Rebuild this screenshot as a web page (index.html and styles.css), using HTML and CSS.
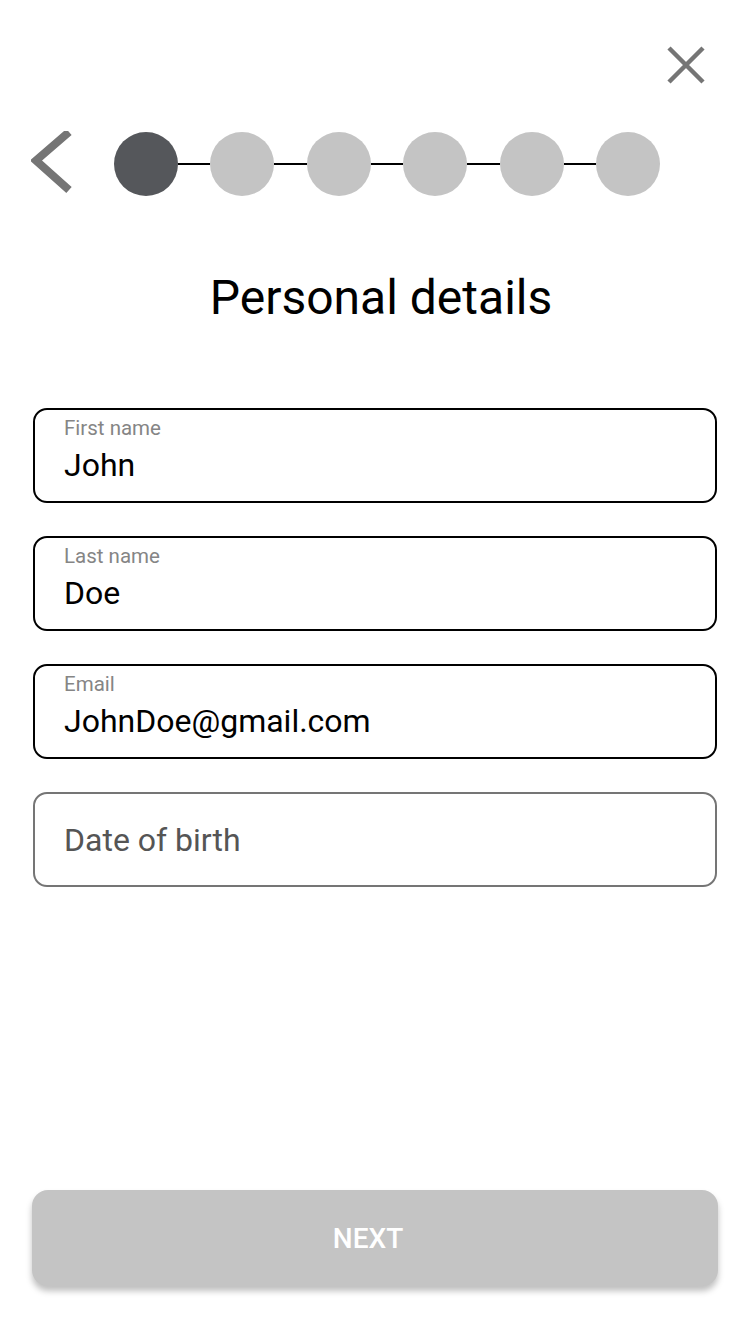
FILE: index.html
```html
<!DOCTYPE html>
<html lang="en">
<head>
<meta charset="utf-8">
<title>Personal details</title>
<link rel="stylesheet" href="styles.css">
</head>
<body>
<div class="screen">
  <div class="topbar">
    <button class="icon-btn close" aria-label="Close">
      <svg width="40" height="40" viewBox="0 0 40 40"><path d="M3 3 L37 37 M37 3 L3 37" stroke="#757575" stroke-width="4.5" fill="none"/></svg>
    </button>
  </div>
  <div class="stepper-row">
    <button class="icon-btn back" aria-label="Back">
      <svg width="44" height="66" viewBox="0 0 44 66"><path d="M38 1 L5 29.5 L38 59" stroke="#757575" stroke-width="8" fill="none"/></svg>
    </button>
    <div class="stepper">
      <span class="dot active"></span><span class="line"></span>
      <span class="dot"></span><span class="line"></span>
      <span class="dot"></span><span class="line"></span>
      <span class="dot"></span><span class="line"></span>
      <span class="dot"></span><span class="line"></span>
      <span class="dot"></span>
    </div>
  </div>
  <h1 class="title">Personal details</h1>
  <form class="form">
    <div class="field filled">
      <span class="label">First name</span>
      <span class="value">John</span>
    </div>
    <div class="field filled">
      <span class="label">Last name</span>
      <span class="value">Doe</span>
    </div>
    <div class="field filled">
      <span class="label">Email</span>
      <span class="value">JohnDoe@gmail.com</span>
    </div>
    <div class="field empty">
      <span class="placeholder">Date of birth</span>
    </div>
  </form>
  <div class="spacer"></div>
  <button class="next-btn">NEXT</button>
</div>
</body>
</html>
```
FILE: styles.css
```css
* { box-sizing: border-box; }
html, body { margin: 0; padding: 0; background: #fff; }
body { font-family: Roboto, "Noto Sans", sans-serif; color: #000; }
.screen {
  width: 750px;
  height: 1334px;
  display: flex;
  flex-direction: column;
  padding: 0 32px 48px 32px;
}
.icon-btn {
  background: none;
  border: 0;
  padding: 0;
  margin: 0;
  display: block;
  line-height: 0;
}
.topbar {
  display: flex;
  justify-content: flex-end;
  padding-top: 45px;
  padding-right: 12px;
}
.close { width: 40px; height: 40px; }
.stepper-row {
  display: flex;
  align-items: center;
  margin-top: 46px;
  height: 66px;
}
.back { width: 44px; height: 66px; margin-left: -1px; }
.stepper {
  display: flex;
  align-items: center;
  margin-left: 39px;
}
.dot {
  width: 64px;
  height: 64px;
  border-radius: 50%;
  background: #c4c4c4;
  flex: none;
}
.dot.active { background: #55575b; }
.line {
  width: 32.4px;
  height: 2px;
  background: #000;
  flex: none;
}
.title {
  margin: 73px 0 0 0;
  font-weight: 400;
  font-size: 48px;
  line-height: 56px;
  text-align: center;
  padding-left: 12px;
}
.form {
  margin-top: 82px;
  display: flex;
  flex-direction: column;
  gap: 33px;
  padding: 0 1px;
}
.field {
  height: 95px;
  border: 2px solid #000;
  border-radius: 14px;
  padding: 0 29px;
  display: flex;
  flex-direction: column;
}
.field.filled { justify-content: flex-start; padding-top: 6px; }
.label {
  font-size: 20.5px;
  line-height: 24px;
  color: #858585;
}
.value {
  font-size: 32px;
  line-height: 38px;
  margin-top: 6px;
  color: #000;
}
.field.empty {
  border-color: #757575;
  justify-content: center;
}
.placeholder {
  font-size: 32px;
  line-height: 38px;
  color: #555;
  margin-top: 1px;
}
.spacer { flex: 1; }
.next-btn {
  height: 96px;
  border: 0;
  border-radius: 16px;
  background: #c4c4c4;
  color: #fff;
  font-family: Roboto, "Noto Sans", sans-serif;
  font-size: 28px;
  font-weight: 500;
  padding: 0 14px 0 0;
  box-shadow: 0 5px 6px rgba(0,0,0,0.25);
  width: 686px;
}
```
